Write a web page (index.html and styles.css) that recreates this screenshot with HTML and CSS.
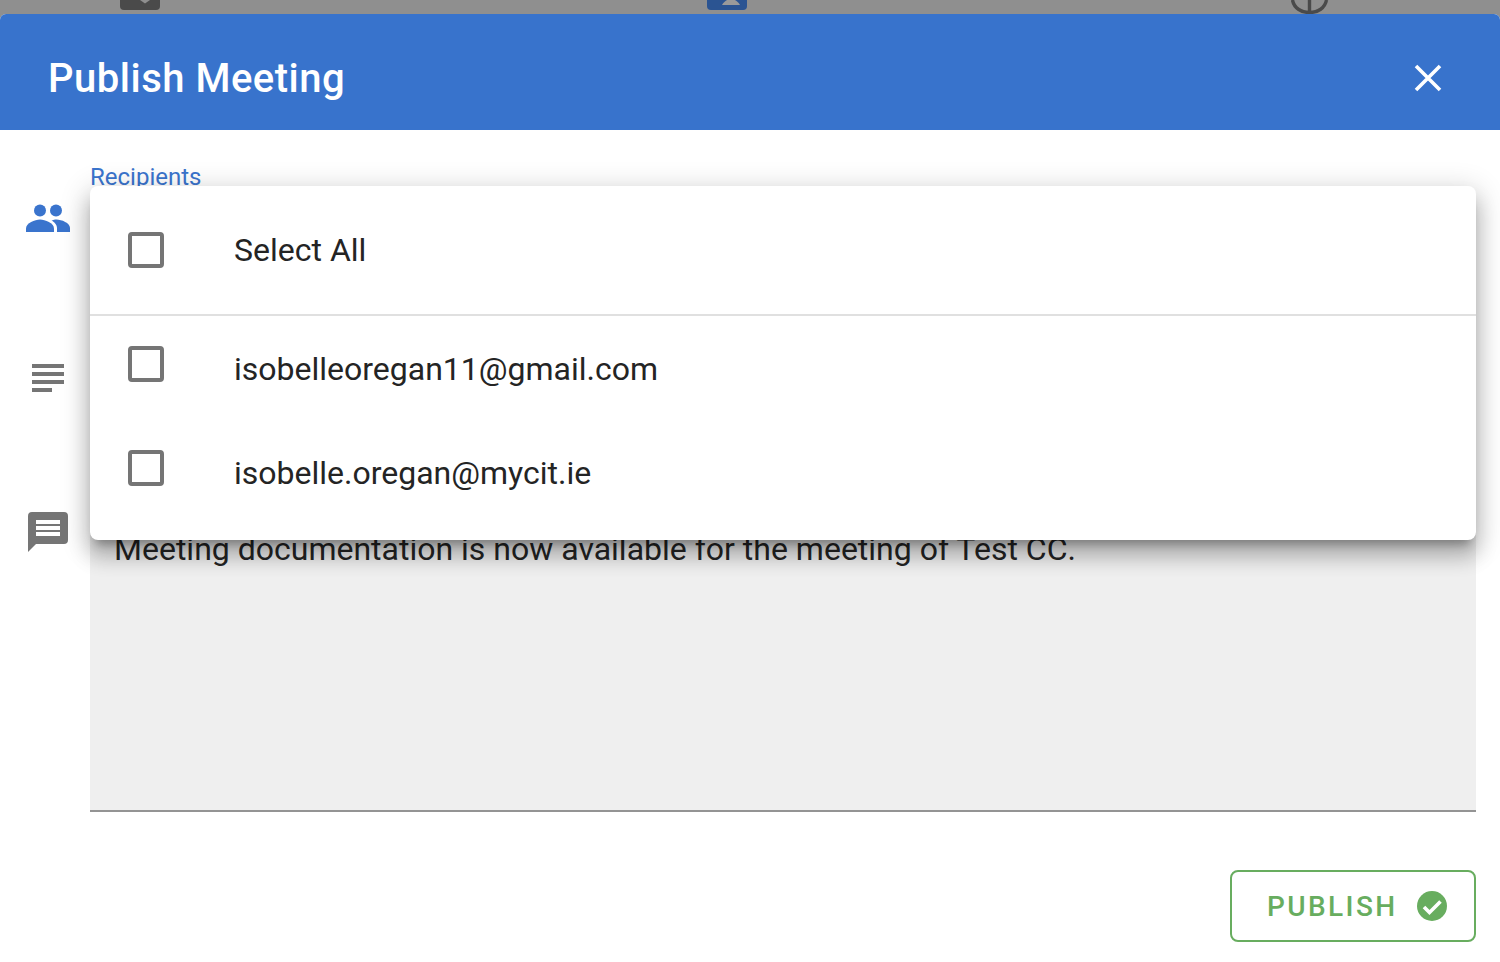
FILE: index.html
```html
<!DOCTYPE html>
<html lang="en">
<head>
<meta charset="utf-8">
<title>Publish Meeting</title>
<link rel="stylesheet" href="styles.css">
</head>
<body>
<div class="backdrop">
  <div class="bg-icon bg-dark"><svg viewBox="0 0 40 14" width="40" height="14"><path d="M31 0 L30 4 L25 7.500 L20 4 L19 0z" fill="#8f8f8f"/></svg></div>
  <div class="bg-icon bg-blue"><svg viewBox="0 0 40 14" width="40" height="14"><path d="M15 9 C16 7 18 5 20 4 h8 C30 5 32 7 33 9z" fill="#9a9a9a"/></svg></div>
  <div class="bg-icon bg-globe"><svg viewBox="0 0 40 14" width="40" height="14"><path d="M1.500 0 C3 8 10 12.500 18.500 12.500 C27 12.500 34 8 35.500 0 M18.500 0 V13" fill="none" stroke="#4a4a4a" stroke-width="3.400"/></svg></div>
</div>
<main class="modal">
  <header class="modal-header">
    <h1 class="modal-title">Publish Meeting</h1>
    <button class="close" aria-label="Close"><svg viewBox="0 0 28 28" width="28" height="28"><path d="M2 2 L26 26 M26 2 L2 26" stroke="#fff" stroke-width="3.600" fill="none"/></svg></button>
  </header>
  <div class="modal-body">
    <div class="rows">
      <div class="side-icons">
        <svg class="ic-people" viewBox="0 0 44 28" width="44" height="28"><g fill="#3a74cd"><circle cx="14" cy="6.500" r="6"/><circle cx="30" cy="6.500" r="6"/><path d="M0 28 v-3.500 C0 19 9 15.500 14 15.500 S28 19 28 24.500 V28z"/><path d="M31 28 v-4 C31 20.500 28 18 25.500 16.500 C27 16 29 15.500 30.500 15.500 C35.500 15.500 44 19 44 24 v4z"/></g></svg>
        <svg class="ic-lines" viewBox="0 0 32 28" width="32" height="28"><g fill="#757575"><rect y="0" width="32" height="4"/><rect y="8" width="32" height="4"/><rect y="16" width="32" height="4"/><rect y="24" width="20" height="4"/></g></svg>
        <svg class="ic-comment" viewBox="0 0 40 40" width="40" height="40"><path fill-rule="evenodd" fill="#757575" d="M4 0 H36 a4 4 0 0 1 4 4 V28 a4 4 0 0 1 -4 4 H8 L0 40 V4 a4 4 0 0 1 4 -4z M8 8 V12 H32 V8z M8 14 V18 H32 V14z M8 20 V24 H32 V20z"/></svg>
      </div>
      <div class="fields">
        <label class="field-label">Recipients</label>
        <div class="message">Meeting documentation is now available for the meeting of Test CC.</div>
      </div>
    </div>
    <div class="actions">
      <button class="publish">PUBLISH
        <svg viewBox="0 0 30 30" width="30" height="30"><circle cx="15" cy="15" r="15" fill="#68ad5f"/><path d="M7 16 L12.500 21.500 L23.500 10.500" fill="none" stroke="#fff" stroke-width="3.600"/></svg>
      </button>
    </div>
  </div>
</main>
<div class="menu">
  <div class="menu-item menu-all"><span class="check"></span><span>Select All</span></div>
  <div class="menu-item menu-mail"><span class="check"></span><span>isobelleoregan11@gmail.com</span></div>
  <div class="menu-item menu-mail"><span class="check"></span><span>isobelle.oregan@mycit.ie</span></div>
</div>
</body>
</html>
```
FILE: styles.css
```css
* { box-sizing: border-box; }
html, body { margin: 0; height: 962px; overflow: hidden; }
body {
  background: #8f8f8f;
  font-family: Roboto, "Liberation Sans", sans-serif;
  color: #242424;
  display: flex;
  flex-direction: column;
}
.backdrop {
  height: 14px;
  display: flex;
  flex: none;
  padding-left: 120px;
}
.bg-icon { width: 40px; height: 10px; border-radius: 0 0 4px 4px; overflow: hidden; }
.bg-icon svg { display: block; margin-top: -4px; }
.bg-dark { background: #4a4a4a; }
.bg-blue { background: #2b5492; margin-left: 547px; }
.bg-globe { height: 14px; margin-left: 544px; border-radius: 0; background: none; }
.bg-globe svg { margin-top: 0; }
.modal {
  flex: 1;
  background: #fff;
  border-radius: 6px 6px 0 0;
  display: flex;
  flex-direction: column;
}
.modal-header {
  height: 116px;
  flex: none;
  background: #3873cc;
  border-radius: 6px 6px 0 0;
  color: #fff;
  display: flex;
  align-items: center;
  justify-content: space-between;
  padding: 12px 58px 0 48px;
}
.modal-title { margin: 0; font-size: 40px; font-weight: 500; letter-spacing: .5px; }
.close { border: 0; background: none; padding: 0; display: flex; }
.modal-body { flex: 1; display: flex; flex-direction: column; padding-right: 24px; }
.rows { display: flex; }
.side-icons {
  width: 90px;
  flex: none;
  display: flex;
  flex-direction: column;
  align-items: center;
  padding: 74px 0 0 6px;
}
.ic-lines { margin-top: 132px; }
.ic-comment { margin-top: 120px; }
.fields { flex: 1; display: flex; flex-direction: column; padding-top: 32px; }
.field-label { font-size: 24px; line-height: 31px; color: #3a74cd; }
.message {
  margin-top: 337px;
  height: 282px;
  background: #efefef;
  border-bottom: 2px solid #949494;
  font-size: 32px;
  line-height: 38px;
  padding: 0 24px;
}
.actions { display: flex; justify-content: flex-end; padding-top: 58px; }
.publish {
  width: 246px;
  height: 72px;
  background: #fff;
  border: 2px solid #68ad5f;
  border-radius: 8px;
  color: #68ad5f;
  font: 500 28px Roboto, sans-serif;
  letter-spacing: 2.400px;
  display: flex;
  align-items: center;
  justify-content: flex-start;
  gap: 19px;
  padding: 0 0 0 35px;
}
.menu {
  position: absolute;
  left: 90px;
  top: 186px;
  width: 1386px;
  height: 354px;
  background: #fff;
  border-radius: 8px;
  box-shadow: 0 10px 10px -6px rgba(0,0,0,.28), 0 16px 20px 2px rgba(0,0,0,.18), 0 6px 28px 4px rgba(0,0,0,.16);
  display: flex;
  flex-direction: column;
}
.menu-item { display: flex; align-items: center; padding-left: 38px; font-size: 32px; }
.menu-all { height: 130px; border-bottom: 2px solid #e0e0e0; flex: none; margin-bottom: 1px; }
.menu-mail { height: 104px; flex: none; }
.check {
  width: 36px;
  height: 36px;
  border: 4px solid #757575;
  border-radius: 4px;
  margin-right: 70px;
  flex: none;
}
.menu-mail .check { margin-top: -10px; }
```
